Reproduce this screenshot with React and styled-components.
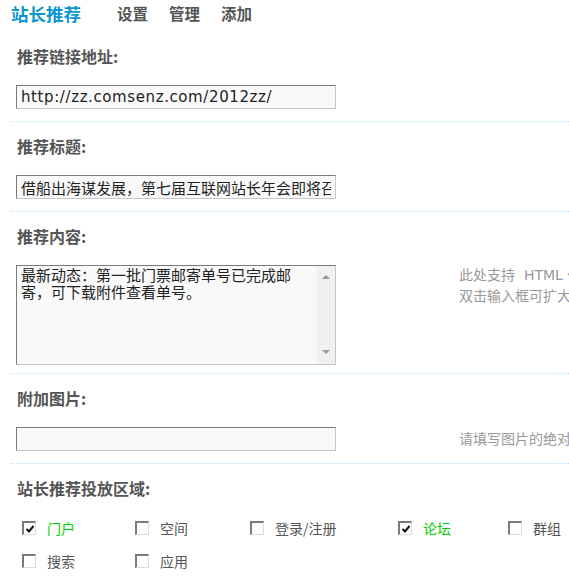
import React from 'react';
import styled, { createGlobalStyle } from 'styled-components';

const GlobalStyle = createGlobalStyle`
  html, body {
    margin: 0;
    padding: 0;
    background: #fff;
    overflow: hidden;
  }
  body {
    font-family: "DejaVu Sans", "Noto Sans CJK SC", sans-serif;
    color: #555;
  }
`;

const areas = [
  [
    { name: '门户', checked: true, width: 113 },
    { name: '空间', width: 115 },
    { name: '登录/注册', width: 148 },
    { name: '论坛', checked: true, width: 110 },
    { name: '群组' },
  ],
  [
    { name: '搜索', width: 113 },
    { name: '应用' },
  ],
];

export default function App() {
  return (
    <>
      <GlobalStyle />
      <Page>
        <Header>
          <Title>站长推荐</Title>
          <NavLink>设置</NavLink>
          <NavLink>管理</NavLink>
          <NavLink>添加</NavLink>
        </Header>

        <Section>
          <Label>推荐链接地址:</Label>
          <Row>
            <TextInput spacing={0.6} defaultValue="http://zz.comsenz.com/2012zz/" />
          </Row>
        </Section>

        <Section>
          <Label>推荐标题:</Label>
          <Row>
            <TextInput defaultValue="借船出海谋发展，第七届互联网站长年会即将召开" />
          </Row>
        </Section>

        <Section pb={8}>
          <Label>推荐内容:</Label>
          <Row>
            <TextBox>
              <TextArea defaultValue="最新动态：第一批门票邮寄单号已完成邮寄，可下载附件查看单号。" />
              <ScrollTrack>
                <Arrow />
                <Arrow down />
              </ScrollTrack>
            </TextBox>
            <Hint lh={21}>
              <div>此处支持  HTML 代码</div>
              <div>双击输入框可扩大/缩小</div>
            </Hint>
          </Row>
        </Section>

        <Section>
          <Label>附加图片:</Label>
          <Row>
            <TextInput defaultValue="" />
            <Hint lh={24}>请填写图片的绝对地址</Hint>
          </Row>
        </Section>

        <Section last>
          <Label>站长推荐投放区域:</Label>
          <CheckList>
            {areas.map((row, i) => (
              <CheckRow key={i}>
                {row.map((item) => (
                  <CheckItem key={item.name} w={item.width}>
                    <Box>
                      {item.checked && (
                        <svg width="10" height="10" viewBox="0 0 10 10">
                          <polyline
                            points="1.5,5 4,7.5 8.5,2"
                            fill="none"
                            stroke="#111"
                            strokeWidth="2"
                          />
                        </svg>
                      )}
                    </Box>
                    <CheckLabel checked={item.checked}>{item.name}</CheckLabel>
                  </CheckItem>
                ))}
              </CheckRow>
            ))}
          </CheckList>
        </Section>
      </Page>
    </>
  );
}

const Page = styled.div`
  width: 100%;
  overflow: hidden;
`;

const Header = styled.div`
  display: flex;
  align-items: center;
  height: 26px;
  padding: 0 0 6px 11px;
  white-space: nowrap;
`;

const Title = styled.span`
  font-family: "Noto Sans CJK SC", sans-serif;
  font-size: 17.5px;
  font-weight: bold;
  color: #0b96cf;
  margin-right: 36px;
`;

const NavLink = styled.span`
  font-family: "Noto Sans CJK SC", sans-serif;
  font-size: 15.5px;
  font-weight: bold;
  color: #555;
  margin-right: 21px;
`;

const Section = styled.div`
  margin-left: 10px;
  padding: 14px 0 ${(p) => (p.pb != null ? p.pb : 12)}px 6px;
  border-bottom: ${(p) => (p.last ? 'none' : '1px dotted #b8e0f6')};
`;

const Label = styled.div`
  font-family: "Noto Sans CJK SC", sans-serif;
  font-size: 16px;
  font-weight: bold;
  line-height: 20px;
  color: #555;
  padding-left: 1px;
  margin-bottom: 19px;
`;

const Row = styled.div`
  display: flex;
  align-items: flex-start;
  white-space: nowrap;
`;

const TextInput = styled.input`
  flex: none;
  box-sizing: border-box;
  width: 320px;
  height: 24px;
  margin: 0;
  padding: 0 4px;
  border: 1px solid #c6c6c6;
  border-top-color: #7b7b7b;
  border-left-color: #7b7b7b;
  background: #f9f9f9;
  font-family: "DejaVu Sans", "Noto Sans CJK SC", sans-serif;
  font-size: 15px;
  letter-spacing: ${(p) => p.spacing || 0}px;
  color: #222;
  outline: none;
`;

const TextBox = styled.div`
  flex: none;
  display: flex;
  box-sizing: border-box;
  width: 320px;
  height: 100px;
  border: 1px solid #c6c6c6;
  border-top-color: #7b7b7b;
  border-left-color: #7b7b7b;
  background: #f9f9f9;
`;

const TextArea = styled.textarea`
  flex: 1;
  min-width: 0;
  margin: 0;
  padding: 2px 4px;
  border: none;
  background: transparent;
  resize: none;
  overflow: hidden;
  font-family: "DejaVu Sans", "Noto Sans CJK SC", sans-serif;
  font-size: 15px;
  line-height: 17px;
  color: #222;
  outline: none;
`;

const ScrollTrack = styled.div`
  flex: none;
  width: 19px;
  display: flex;
  flex-direction: column;
  align-items: center;
  justify-content: space-between;
  padding: 9px 0 10px;
  box-sizing: border-box;
  background: #f0f0f0;
  border-left: 1px solid #f6f6f6;
`;

const Arrow = styled.span`
  width: 0;
  height: 0;
  border-left: 4px solid transparent;
  border-right: 4px solid transparent;
  ${(p) =>
    p.down ? 'border-top: 4px solid #9a9a9a;' : 'border-bottom: 4px solid #9a9a9a;'}
`;

const Hint = styled.div`
  margin-left: 123px;
  white-space: pre;
  font-family: "DejaVu Sans", "Noto Sans CJK SC", sans-serif;
  font-size: 14px;
  line-height: ${(p) => p.lh}px;
  color: #999;
`;

const CheckList = styled.div`
  display: flex;
  flex-direction: column;
  gap: 11px;
  padding-left: 6px;
`;

const CheckRow = styled.div`
  display: flex;
  white-space: nowrap;
`;

const CheckItem = styled.label`
  display: flex;
  align-items: center;
  flex: none;
  width: ${(p) => (p.w ? `${p.w}px` : 'auto')};
  height: 22px;
`;

const Box = styled.span`
  box-sizing: border-box;
  width: 14px;
  height: 14px;
  display: flex;
  align-items: center;
  justify-content: center;
  background: #fff;
  border-top: 2px solid #7b7b7b;
  border-left: 2px solid #7b7b7b;
  border-right: 1px solid #dcdcdc;
  border-bottom: 1px solid #dcdcdc;
`;

const CheckLabel = styled.span`
  margin-left: 11px;
  font-family: "Noto Sans CJK SC", sans-serif;
  font-size: 14px;
  line-height: 22px;
  color: ${(p) => (p.checked ? '#00d000' : '#555')};
`;
